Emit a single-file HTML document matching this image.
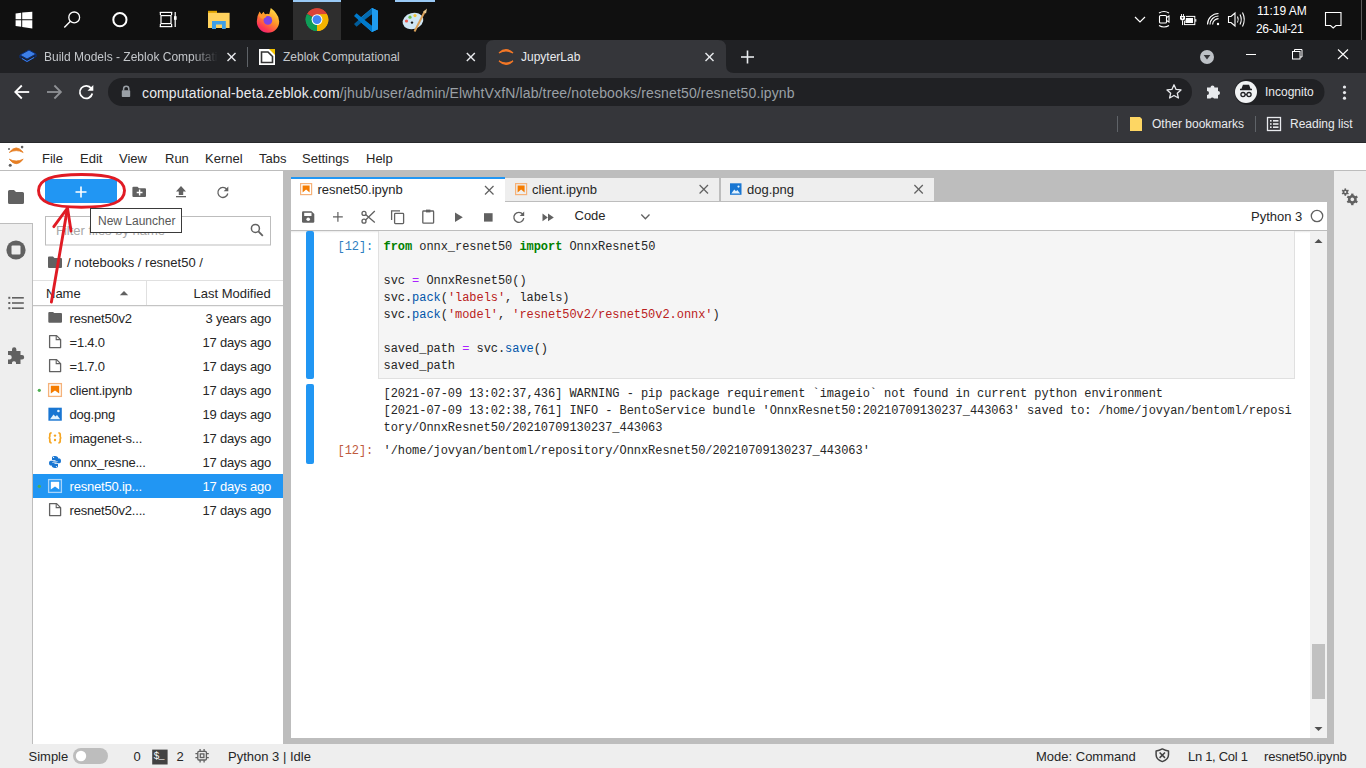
<!DOCTYPE html>
<html><head><meta charset="utf-8">
<style>
*{margin:0;padding:0;box-sizing:border-box}
html,body{width:1366px;height:768px;overflow:hidden;background:#fff;font-family:"Liberation Sans",sans-serif}
.a{position:absolute}
.t{position:absolute;white-space:nowrap;line-height:1}
svg{position:absolute;overflow:visible}
#taskbar{left:0;top:0;width:1366px;height:40px;background:#101010}
#tabstrip{left:0;top:40px;width:1366px;height:33px;background:#202124}
#toolbar{left:0;top:73px;width:1366px;height:70px;background:#35363a}
#omni{left:108px;top:78px;width:1084px;height:28px;border-radius:14px;background:#202124}
.ct{color:#e8eaed;font-size:12px}
.mono{font-family:"Liberation Mono",monospace}
</style></head>
<body>
<!-- ========== Windows taskbar ========== -->
<div id="taskbar" class="a"></div>
<!-- windows logo -->
<svg style="left:0;top:0" width="1366" height="40">
 <polygon points="15.6,13.6 21.2,12.8 21.2,19.2 15.6,19.2" fill="#fff"/>
 <polygon points="22.2,12.6 32.3,11.8 32.3,19.2 22.2,19.2" fill="#fff"/>
 <polygon points="15.6,20.2 21.2,20.2 21.2,26.8 15.6,26" fill="#fff"/>
 <polygon points="22.2,20.2 32.3,20.2 32.3,28.5 22.2,27" fill="#fff"/>
 <!-- search -->
 <circle cx="74.2" cy="17.4" r="5.4" fill="none" stroke="#fff" stroke-width="1.3"/>
 <line x1="70.4" y1="21.3" x2="64.3" y2="27.6" stroke="#fff" stroke-width="1.4"/>
 <!-- cortana -->
 <circle cx="119.9" cy="19.7" r="6.6" fill="none" stroke="#fff" stroke-width="2"/>
 <!-- task view -->
 <g fill="none" stroke="#fff" stroke-width="1.2">
  <rect x="161" y="15.6" width="10" height="8"/>
  <line x1="159.8" y1="12.4" x2="172.2" y2="12.4"/>
  <line x1="159.8" y1="26.6" x2="172.2" y2="26.6"/>
  <line x1="160.4" y1="12" x2="160.4" y2="15"/>
  <line x1="171.6" y1="12" x2="171.6" y2="15"/>
  <line x1="160.4" y1="24" x2="160.4" y2="27"/>
  <line x1="171.6" y1="24" x2="171.6" y2="27"/>
  <line x1="175.2" y1="12" x2="175.2" y2="27"/>
 </g>
 <rect x="174" y="16.2" width="2.6" height="3.6" fill="#fff"/>
 <!-- explorer -->
 <rect x="208" y="10.8" width="9" height="3" fill="#e0a400"/>
 <rect x="208" y="12.8" width="21.6" height="15.2" fill="#ffd25e"/>
 <path d="M212,28.9 V21 H225.8 V28.9 H222 V24.6 H216 V28.9 Z" fill="#3f9fe6"/>
 <!-- firefox -->
 <defs>
  <linearGradient id="ffg" x1="0.8" y1="0" x2="0.2" y2="1">
   <stop offset="0" stop-color="#ffe34a"/><stop offset="0.45" stop-color="#ff9628"/><stop offset="0.8" stop-color="#ff3a52"/><stop offset="1" stop-color="#e8207a"/>
  </linearGradient>
 </defs>
 <path d="M259.6,11.4 L261.4,14.3 L263.5,11.8 L265,14.2 Q267.2,13.4 269.2,14.2 L270.8,7.9 Q274.3,10.3 276.2,13.6 Q279.2,17.2 279.2,21.5 A11.2,11.2 0 0 1 256.8,21.5 Q256.8,15.6 259.6,11.4 Z" fill="url(#ffg)"/>
 <circle cx="267.9" cy="20.4" r="4.3" fill="#7f44e6"/>
 <path d="M258.8,14.6 Q263.2,14 266.6,16.6 Q265.2,18.6 262.4,18.8 Q259.8,18.2 258.8,14.6 Z" fill="#ff9a2e"/>
 <!-- chrome highlight -->
 <rect x="293" y="0" width="48" height="40" fill="#2e2e2e"/>
 <rect x="293" y="0" width="48" height="2" fill="#99c9f5"/>
 <rect x="395" y="0" width="40" height="2" fill="#99c9f5"/>
 <!-- chrome icon -->
 <g transform="translate(317,19.6)">
  <path d="M0,0 L11.4,0 A11.4,11.4 0 0 0 -9.87,-5.7 Z" fill="#db4437"/>
  <path d="M0,0 L-9.87,-5.7 A11.4,11.4 0 0 0 0,11.4 Z" fill="#0f9d58"/>
  <path d="M0,0 L0,11.4 A11.4,11.4 0 0 0 11.4,0 Z" fill="#f4b400"/>
  <path d="M0,-5.4 L9.87,-5.7 A11.4,11.4 0 0 0 -9.87,-5.7 Z" fill="#db4437"/>
  <path d="M4.7,2.7 L0,11.4 A11.4,11.4 0 0 0 9.87,-5.7 L0,-5.4 Z" fill="#f4b400"/>
  <path d="M-4.7,2.7 L-9.87,-5.7 A11.4,11.4 0 0 0 0,11.4 Z" fill="#0f9d58"/>
  <circle r="5.4" fill="#fff"/>
  <circle r="4.4" fill="#4285f4"/>
 </g>
 <!-- vscode -->
 <path d="M372,8 L378,10.8 V29.2 L372,32 L358,19.8 Z M372,14 L363.5,20 L372,26 Z" fill="#1f9cf0"/>
 <path d="M372,8 L354,24 L356.5,26.8 L372,14 Z" fill="#0065a9" opacity="0.9"/>
 <path d="M372,32 L354,16 L356.5,13.2 L372,26 Z" fill="#007acc"/>
 <path d="M372,8 L378,10.8 V29.2 L372,32 Z" fill="#1f9cf0"/>
 <!-- paint -->
 <ellipse cx="413" cy="21" rx="10.5" ry="8" fill="#cfe6f5" transform="rotate(-15 413 21)"/>
 <circle cx="406.5" cy="21" r="1.6" fill="#e85a4f"/>
 <circle cx="410" cy="17.2" r="1.6" fill="#6bc04b"/>
 <circle cx="415" cy="15.6" r="1.6" fill="#f2c23a"/>
 <circle cx="412" cy="22.6" r="1.2" fill="#101010"/>
 <line x1="414.5" y1="31.5" x2="425" y2="11" stroke="#d9a05a" stroke-width="2"/>
 <path d="M423,12 L427,8.5 L426,13.5 Z" fill="#e8c890"/>
 <!-- tray -->
 <polyline points="1135,17 1140,22 1145,17" fill="none" stroke="#fff" stroke-width="1.2"/>
 <g fill="none" stroke="#fff" stroke-width="1.1">
  <rect x="1159.5" y="15.5" width="7" height="7.5" rx="1"/>
  <path d="M1166.5,17.5 L1169,16 V22 L1166.5,20.5"/>
  <path d="M1159,13 Q1164,10 1169,13" />
  <path d="M1159,25.5 Q1164,28.5 1169,25.5"/>
 </g>
 <rect x="1184.4" y="16.4" width="10.4" height="8.2" fill="none" stroke="#fff" stroke-width="1"/>
 <rect x="1185.4" y="18" width="7.6" height="5" fill="#fff"/>
 <rect x="1195.2" y="19.1" width="1.1" height="2.6" fill="#fff"/>
 <path d="M1180,16 H1185 V18.5 Q1185,20.4 1182.5,20.6 Q1180,20.4 1180,18.5 Z" fill="#fff" stroke="#101010" stroke-width="1.6"/>
 <path d="M1180,16 H1185 V18.5 Q1185,20.4 1182.5,20.6 Q1180,20.4 1180,18.5 Z" fill="#fff"/>
 <path d="M1181.4,17.2 H1183.6 L1182.5,19 Z" fill="#101010"/>
 <rect x="1181" y="14" width="0.9" height="2" fill="#fff"/><rect x="1183.1" y="14" width="0.9" height="2" fill="#fff"/>
 <rect x="1182" y="20.4" width="1" height="4.7" fill="#fff"/>
 <g fill="none" stroke="#fff" stroke-width="1.1">
  <path d="M1207.5,24.5 A11,11 0 0 1 1218.5,13.5"/>
  <path d="M1210,24.5 A8.5,8.5 0 0 1 1218.5,16"/>
  <path d="M1212.6,24.5 A6,6 0 0 1 1218.5,18.6"/>
 </g>
 <circle cx="1218" cy="24" r="1.2" fill="#fff"/>
 <g fill="none" stroke="#fff" stroke-width="1.1">
  <path d="M1228.5,16.5 H1231 L1235,13 V26 L1231,22.5 H1228.5 Z"/>
  <path d="M1237.5,16.5 Q1239,19.5 1237.5,22.5"/>
  <path d="M1240,14.5 Q1242.5,19.5 1240,24.5"/>
  <path d="M1242.5,12.5 Q1246,19.5 1242.5,26.5"/>
 </g>
 <path d="M1325.5,12.5 H1341 V25.5 H1336 L1333.2,28 L1330.5,25.5 H1325.5 Z" fill="none" stroke="#fff" stroke-width="1.1"/>
 <rect x="1361" y="0" width="1" height="40" fill="#5a5a5a"/>
</svg>
<div class="t" style="left:1257px;top:5px;font-size:12px;color:#fff">11:19 AM</div>
<div class="t" style="left:1256px;top:23px;font-size:12px;color:#fff;letter-spacing:-0.3px">26-Jul-21</div>
<!-- ========== Chrome ========== -->
<div id="tabstrip" class="a"></div>
<div id="toolbar" class="a"></div>
<svg style="left:0;top:0" width="1366" height="143">
 <!-- active tab -->
 <path d="M478,73 Q486,73 486,65 V48 Q486,40 494,40 H718 Q726,40 726,48 V65 Q726,73 734,73 Z" fill="#35363a"/>
 <!-- separator -->
 <rect x="247" y="47" width="1" height="20" fill="#5f6368"/>
 <!-- tab1 icon (book) -->
 <path d="M20,55 L29,50 L36,54 L27,59 Z" fill="#3d7fe8" stroke="#0b2f7a" stroke-width="1"/>
 <path d="M20,55 V57.5 L27,61.5 L36,56.5 V54" fill="none" stroke="#0b2f7a" stroke-width="1.2"/>
 <path d="M22,58.5 L27,61.5 L34,57.5" fill="none" stroke="#3d7fe8" stroke-width="1"/>
 <!-- close x's -->
 <g stroke="#e8eaed" stroke-width="1.4">
  <line x1="227.5" y1="53" x2="235.5" y2="61"/><line x1="235.5" y1="53" x2="227.5" y2="61"/>
  <line x1="466.8" y1="53" x2="474.8" y2="61"/><line x1="474.8" y1="53" x2="466.8" y2="61"/>
  <line x1="705.5" y1="53" x2="713.5" y2="61"/><line x1="713.5" y1="53" x2="705.5" y2="61"/>
  <line x1="741" y1="57" x2="754" y2="57" stroke-width="1.6"/><line x1="747.5" y1="50.5" x2="747.5" y2="63.5" stroke-width="1.6"/>
 </g>
 <!-- tab2 icon -->
 <rect x="259" y="49" width="16" height="16" fill="#fff"/>
 <path d="M261.5,52 H268 L272.5,56.5 V62.5 H261.5 Z" fill="none" stroke="#333" stroke-width="1.6"/>
 <path d="M269,49 H275 V55 Z" fill="#f2c200"/>
 <!-- jupyter icon -->
 <path d="M499,53 Q506,46.5 513,53 Q506,49 499,53 Z" fill="#f37726" stroke="#f37726" stroke-width="1.2"/>
 <path d="M499,61 Q506,67.5 513,61 Q506,65 499,61 Z" fill="#f37726" stroke="#f37726" stroke-width="1.2"/>
 <!-- tab search -->
 <circle cx="1207" cy="57" r="7" fill="#bdc1c6"/>
 <path d="M1203.6,55 H1210.4 L1207,59.6 Z" fill="#35363a"/>
 <!-- window controls -->
 <line x1="1246" y1="54.5" x2="1256" y2="54.5" stroke="#fff" stroke-width="1"/>
 <rect x="1292.5" y="51.5" width="7.5" height="7.5" fill="none" stroke="#fff" stroke-width="1"/>
 <path d="M1294.5,51.5 V49.5 H1302 V57 H1300" fill="none" stroke="#fff" stroke-width="1"/>
 <line x1="1338" y1="49.5" x2="1348" y2="59" stroke="#fff" stroke-width="1.1"/>
 <line x1="1348" y1="49.5" x2="1338" y2="59" stroke="#fff" stroke-width="1.1"/>
 <!-- nav -->
 <g fill="none" stroke="#fff" stroke-width="1.8">
  <path d="M29.2,92 H16"/><path d="M21.8,85.5 L15.3,92 L21.8,98.5"/>
 </g>
 <g fill="none" stroke="#8f9195" stroke-width="1.8">
  <path d="M47,92 H60.2"/><path d="M54.4,85.5 L60.9,92 L54.4,98.5"/>
 </g>
 <path d="M91.3,88.5 A6.3,6.3 0 1 0 92.3,93.5" fill="none" stroke="#fff" stroke-width="1.8"/>
 <path d="M93.3,85 V90.8 H87.5 Z" fill="#fff"/>
</svg>
<div class="a" style="left:0;top:142px;width:1366px;height:1px;background:#28292c"></div>
<div id="omni" class="a"></div>
<svg style="left:0;top:0" width="1366" height="143">
 <!-- lock -->
 <path d="M123.6,90.5 V88.8 A2.6,2.6 0 0 1 128.8,88.8 V90.5" fill="none" stroke="#9aa0a6" stroke-width="1.5"/>
 <rect x="121.8" y="90.3" width="8.4" height="6.7" rx="0.8" fill="#9aa0a6"/>
 <!-- star -->
 <path d="M1174,84.8 L1176.1,89.4 L1181,89.9 L1177.3,93.2 L1178.4,98 L1174,95.5 L1169.6,98 L1170.7,93.2 L1167,89.9 L1171.9,89.4 Z" fill="none" stroke="#e8eaed" stroke-width="1.3" stroke-linejoin="round"/>
 <!-- puzzle -->
 <path d="M1207,87.5 H1210.5 A2,2 0 0 1 1214.5,87.5 H1218 V91 A2,2 0 0 1 1218,95 V98.5 H1214 A2,2 0 0 0 1210.5,98.5 H1207 V95 A2,2 0 0 0 1207,91 Z" fill="#e8eaed"/>
 <!-- incognito pill -->
 <rect x="1234.5" y="79" width="90" height="26" rx="13" fill="#202124"/>
 <circle cx="1246" cy="92" r="11" fill="#f1f3f4"/>
 <path d="M1240,89.5 H1252 M1242,89.5 L1243.5,85.5 H1248.5 L1250,89.5" fill="#202124" stroke="#202124" stroke-width="1.6"/>
 <circle cx="1243" cy="94.6" r="2.1" fill="none" stroke="#202124" stroke-width="1.3"/>
 <circle cx="1249" cy="94.6" r="2.1" fill="none" stroke="#202124" stroke-width="1.3"/>
 <line x1="1245" y1="94.6" x2="1247" y2="94.6" stroke="#202124" stroke-width="1"/>
 <!-- menu dots -->
 <circle cx="1344.5" cy="87" r="1.6" fill="#e8eaed"/>
 <circle cx="1344.5" cy="92.6" r="1.6" fill="#e8eaed"/>
 <circle cx="1344.5" cy="98.2" r="1.6" fill="#e8eaed"/>
 <!-- bookmarks -->
 <rect x="1117" y="116" width="1" height="16" fill="#5f6368"/>
 <rect x="1255" y="116" width="1" height="16" fill="#5f6368"/>
 <path d="M1130,117 H1140 L1142,119 V131 H1130 Z" fill="#fdd663"/>
 <rect x="1267.5" y="117.5" width="13" height="13" fill="none" stroke="#e8eaed" stroke-width="1.3"/>
 <g fill="#e8eaed">
  <rect x="1270" y="120" width="1.6" height="1.6"/><rect x="1273" y="120" width="5.5" height="1.6"/>
  <rect x="1270" y="123.2" width="1.6" height="1.6"/><rect x="1273" y="123.2" width="5.5" height="1.6"/>
  <rect x="1270" y="126.4" width="1.6" height="1.6"/><rect x="1273" y="126.4" width="5.5" height="1.6"/>
 </g>
</svg>
<div class="t ct" style="color:#c4c7cb;left:44px;top:51px;width:174px;overflow:hidden;-webkit-mask-image:linear-gradient(90deg,#000 85%,transparent)">Build Models - Zeblok Computational</div>
<div class="t ct" style="color:#c4c7cb;left:283px;top:51px">Zeblok Computational</div>
<div class="t ct" style="left:521px;top:51px">JupyterLab</div>
<div class="t" style="left:142px;top:86px;font-size:14px;color:#e8eaed;letter-spacing:0.14px">computational-beta.zeblok.com<span style="color:#9aa0a6">/jhub/user/admin/ElwhtVxfN/lab/tree/notebooks/resnet50/resnet50.ipynb</span></div>
<div class="t ct" style="left:1265px;top:86px;font-size:12px">Incognito</div>
<div class="t ct" style="left:1152px;top:118px">Other bookmarks</div>
<div class="t ct" style="left:1290px;top:118px">Reading list</div>
<!-- ========== JupyterLab ========== -->
<div class="a" style="left:0;top:143px;width:1366px;height:28px;background:#fff;border-bottom:1px solid #bdbdbd"></div>
<div class="a" style="left:0;top:171px;width:33px;height:573px;background:#eeeeee;border-right:1px solid #bdbdbd"></div>
<div class="a" style="left:0;top:171px;width:33px;height:52px;background:#fff"></div>
<div class="a" style="left:0;top:223px;width:32px;height:1px;background:#bdbdbd"></div>
<div class="a" style="left:33px;top:171px;width:250px;height:573px;background:#fff"></div>
<div class="a" style="left:283px;top:171px;width:1051px;height:573px;background:#bdbdbd"></div>
<div class="a" style="left:1334px;top:171px;width:32px;height:573px;background:#eeeeee"></div>
<div class="a" style="left:0;top:744px;width:1366px;height:24px;background:#eeeeee"></div>
<svg style="left:0;top:0" width="1366" height="768">
 <!-- jupyter logo -->
 <path d="M9.3,152.4 Q16.2,143.4 23.2,152.4 Q16.2,148.8 9.3,152.4 Z" fill="#e67e22" stroke="#e67e22" stroke-width="0.8"/>
 <path d="M9.3,159.2 Q16.2,168.2 23.2,159.2 Q16.2,162.8 9.3,159.2 Z" fill="#e67e22" stroke="#e67e22" stroke-width="0.8"/>
 <circle cx="22.1" cy="147.1" r="1.3" fill="#616161"/>
 <circle cx="9" cy="148.9" r="1" fill="#616161"/>
 <circle cx="10.2" cy="165.3" r="1.5" fill="#616161"/>
 <!-- left sidebar icons -->
 <path d="M8,191.5 Q8,190 9.5,190 H14 L16,192 H22.5 Q24,192 24,193.5 V202.5 Q24,204 22.5,204 H9.5 Q8,204 8,202.5 Z" fill="#616161"/>
 <circle cx="16" cy="250" r="9.6" fill="#616161"/>
 <rect x="11.5" y="245.5" width="9" height="9" rx="1" fill="#eeeeee"/>
 <g fill="#616161">
  <rect x="8.3" y="296.8" width="2" height="2"/><rect x="12" y="297" width="11.8" height="1.6"/>
  <rect x="8.3" y="302" width="2" height="2"/><rect x="12" y="302.2" width="11.8" height="1.6"/>
  <rect x="8.3" y="307.2" width="2" height="2"/><rect x="12" y="307.4" width="11.8" height="1.6"/>
 </g>
 <path d="M8,351 H12 V349.5 A2.2,2.2 0 0 1 16.4,349.5 V351 H20.5 V355 H22 A2.2,2.2 0 0 1 22,359.4 H20.5 V364 H16 V362.5 A2.2,2.2 0 0 0 12,362.5 V364 H8 V359.5 H9.5 A2.2,2.2 0 0 0 9.5,355 H8 Z" fill="#616161"/>
 <!-- file browser toolbar -->
 <rect x="45" y="179" width="72" height="24" fill="#2196f3"/>
 <path d="M81,186.5 V197.5 M75.5,192 H86.5" stroke="#fff" stroke-width="1.6"/>
 <path d="M132.4,187.8 Q132.4,186.7 133.5,186.7 H137.5 L139,188.2 H145 Q146,188.2 146,189.2 V196 Q146,197 145,197 H133.5 Q132.4,197 132.4,196 Z" fill="#616161"/>
 <path d="M139.6,189.6 V195.4 M136.7,192.5 H142.5" stroke="#fff" stroke-width="1.4"/>
 <path d="M181,186 L186,191.5 H183.2 V195 H178.8 V191.5 H176 Z" fill="#616161"/>
 <rect x="176" y="196" width="10" height="1.3" fill="#616161"/>
 <path d="M226.8,189.3 A5,5 0 1 0 227.8,193.5" fill="none" stroke="#616161" stroke-width="1.3"/>
 <path d="M228.3,186.6 V191.2 H223.7 Z" fill="#616161"/>
 <!-- filter box -->
 <rect x="45.5" y="216.5" width="225" height="28.5" fill="#fff" stroke="#bdbdbd" stroke-width="1"/>
 <circle cx="255.4" cy="228.4" r="4" fill="none" stroke="#616161" stroke-width="1.5"/>
 <line x1="258.4" y1="231.4" x2="262.8" y2="235.8" stroke="#616161" stroke-width="1.8"/>
 <!-- breadcrumbs folder -->
 <path d="M48,257.5 Q48,256.5 49,256.5 H53 L54.5,258 H61 Q62,258 62,259 V267 Q62,268 61,268 H49 Q48,268 48,267 Z" fill="#616161"/>
 <!-- header -->
 <rect x="33" y="280" width="250" height="1" fill="#e0e0e0"/>
 <rect x="33" y="305" width="250" height="1" fill="#c4c4c4"/>
 <rect x="33" y="306" width="250" height="1" fill="#f2f2f2"/>
 <rect x="146" y="281" width="1" height="24" fill="#e0e0e0"/>
 <path d="M119.8,295.2 L124,291 L128.2,295.2 Z" fill="#616161"/>
</svg>
<div class="t" style="left:42px;top:152px;font-size:13px;color:#262626">File</div>
<div class="t" style="left:80px;top:152px;font-size:13px;color:#262626">Edit</div>
<div class="t" style="left:119px;top:152px;font-size:13px;color:#262626">View</div>
<div class="t" style="left:165px;top:152px;font-size:13px;color:#262626">Run</div>
<div class="t" style="left:205px;top:152px;font-size:13px;color:#262626">Kernel</div>
<div class="t" style="left:259px;top:152px;font-size:13px;color:#262626">Tabs</div>
<div class="t" style="left:302px;top:152px;font-size:13px;color:#262626">Settings</div>
<div class="t" style="left:366px;top:152px;font-size:13px;color:#262626">Help</div>
<div class="t" style="left:56px;top:224px;font-size:13px;color:#a8a8a8">Filter files by name</div>
<div class="t" style="left:67px;top:256px;font-size:13px;color:#262626">/ notebooks / resnet50 /</div>
<div class="t" style="left:46px;top:287px;font-size:13px;color:#262626">Name</div>
<div class="t" style="left:193.5px;top:287px;font-size:13px;color:#262626">Last Modified</div>
<svg style="left:0;top:0" width="1366" height="768">
<path d="M48.3,313 Q48.3,312 49.3,312 H53 L54.3,313 H61 Q62,313 62,314 V321.8 Q62,322.8 61,322.8 H49.3 Q48.3,322.8 48.3,321.8 Z" fill="#616161"/>
<path d="M49.6,335.6 H56.6 L60.6,339.6 V347.6 H49.6 Z" fill="none" stroke="#616161" stroke-width="1.3" stroke-linejoin="round"/>
<path d="M56.2,335.6 V339.6 H60.6" fill="none" stroke="#616161" stroke-width="1.1"/>
<path d="M49.6,359.6 H56.6 L60.6,363.6 V371.6 H49.6 Z" fill="none" stroke="#616161" stroke-width="1.3" stroke-linejoin="round"/>
<path d="M56.2,359.6 V363.6 H60.6" fill="none" stroke="#616161" stroke-width="1.1"/>
<circle cx="39.3" cy="390.3" r="1.6" fill="#4caf50"/>
<rect x="48.6" y="383.6" width="12.8" height="12.8" fill="none" stroke="#f5b27a" stroke-width="1.3"/>
<path d="M50.8,385.8 H59.2 V393.6 L55,390.4 L50.8,393.6 Z" fill="#f57c00"/>
<rect x="48.4" y="407.7" width="13.4" height="13" fill="#1976d2"/>
<path d="M50,419.2 L53.5,414.5 L55.5,416.5 L57,415 L60.2,419.2 Z" fill="#e3f2fd"/>
<circle cx="58.4" cy="411" r="1.3" fill="#e3f2fd"/>
<path d="M51.6,432.8 Q49.8,432.8 49.8,434.6 V436.6 Q49.8,437.8 48.6,437.8 Q49.8,437.8 49.8,439 V441 Q49.8,442.8 51.6,442.8" fill="none" stroke="#f5a623" stroke-width="1.7"/>
<path d="M58.4,432.8 Q60.2,432.8 60.2,434.6 V436.6 Q60.2,437.8 61.4,437.8 Q60.2,437.8 60.2,439 V441 Q60.2,442.8 58.4,442.8" fill="none" stroke="#f5a623" stroke-width="1.7"/>
<circle cx="55" cy="435.6" r="1.2" fill="#f5a623"/><circle cx="55" cy="440" r="1.2" fill="#f5a623"/>
<path d="M55,456 C52,456 52,457 52,458.5 V460 H55.5 V460.7 H50.7 C49,460.7 49,463 49,463 C49,465 50,465.5 50.8,465.5 H52 V463.5 C52,462.3 53,461.6 54,461.6 H57 C58,461.6 58.3,461 58.3,460 V458.4 C58.3,457 57,456 55,456 Z" fill="#1976d2"/>
<path d="M55,468 C58,468 58,467 58,465.5 V464 H54.5 V463.3 H59.3 C61,463.3 61,461 61,461 C61,459 60,458.5 59.2,458.5 H58 V460.5 C58,461.7 57,462.4 56,462.4 H53 C52,462.4 51.7,463 51.7,464 V465.6 C51.7,467 53,468 55,468 Z" fill="#1976d2"/>
<circle cx="53.6" cy="457.4" r="0.6" fill="#fff"/><circle cx="56.4" cy="466.6" r="0.6" fill="#fff"/>
<rect x="33" y="474" width="250" height="24" fill="#2196f3"/>
<circle cx="39.3" cy="486.3" r="1.6" fill="#4caf50"/>
<rect x="48.6" y="479.6" width="12.8" height="12.8" fill="none" stroke="#a8d4fa" stroke-width="1.3"/>
<path d="M50.8,481.8 H59.2 V489.6 L55,486.4 L50.8,489.6 Z" fill="#fff"/>
<path d="M49.6,503.6 H56.6 L60.6,507.6 V515.6 H49.6 Z" fill="none" stroke="#616161" stroke-width="1.3" stroke-linejoin="round"/>
<path d="M56.2,503.6 V507.6 H60.6" fill="none" stroke="#616161" stroke-width="1.1"/>
</svg>
<div class="t" style="left:69.5px;top:312px;font-size:13px;letter-spacing:-0.2px;color:#262626">resnet50v2</div>
<div class="t" style="left:130px;width:141px;text-align:right;top:312px;font-size:13px;letter-spacing:-0.22px;color:#262626">3 years ago</div>
<div class="t" style="left:69.5px;top:336px;font-size:13px;letter-spacing:-0.2px;color:#262626">=1.4.0</div>
<div class="t" style="left:130px;width:141px;text-align:right;top:336px;font-size:13px;letter-spacing:-0.22px;color:#262626">17 days ago</div>
<div class="t" style="left:69.5px;top:360px;font-size:13px;letter-spacing:-0.2px;color:#262626">=1.7.0</div>
<div class="t" style="left:130px;width:141px;text-align:right;top:360px;font-size:13px;letter-spacing:-0.22px;color:#262626">17 days ago</div>
<div class="t" style="left:69.5px;top:384px;font-size:13px;letter-spacing:-0.2px;color:#262626">client.ipynb</div>
<div class="t" style="left:130px;width:141px;text-align:right;top:384px;font-size:13px;letter-spacing:-0.22px;color:#262626">17 days ago</div>
<div class="t" style="left:69.5px;top:408px;font-size:13px;letter-spacing:-0.2px;color:#262626">dog.png</div>
<div class="t" style="left:130px;width:141px;text-align:right;top:408px;font-size:13px;letter-spacing:-0.22px;color:#262626">19 days ago</div>
<div class="t" style="left:69.5px;top:432px;font-size:13px;letter-spacing:-0.2px;color:#262626">imagenet-s...</div>
<div class="t" style="left:130px;width:141px;text-align:right;top:432px;font-size:13px;letter-spacing:-0.22px;color:#262626">17 days ago</div>
<div class="t" style="left:69.5px;top:456px;font-size:13px;letter-spacing:-0.2px;color:#262626">onnx_resne...</div>
<div class="t" style="left:130px;width:141px;text-align:right;top:456px;font-size:13px;letter-spacing:-0.22px;color:#262626">17 days ago</div>
<div class="t" style="left:69.5px;top:480px;font-size:13px;letter-spacing:-0.2px;color:#fff">resnet50.ip...</div>
<div class="t" style="left:130px;width:141px;text-align:right;top:480px;font-size:13px;letter-spacing:-0.22px;color:#fff">17 days ago</div>
<div class="t" style="left:69.5px;top:504px;font-size:13px;letter-spacing:-0.2px;color:#262626">resnet50v2....</div>
<div class="t" style="left:130px;width:141px;text-align:right;top:504px;font-size:13px;letter-spacing:-0.22px;color:#262626">17 days ago</div>
<!-- notebook panel -->
<div class="a" style="left:291px;top:177px;width:214px;height:25px;background:#fff;border-top:2px solid #2196f3"></div>
<div class="a" style="left:505px;top:177px;width:215px;height:25px;background:#eeeeee;border:1px solid #bdbdbd;border-left:0"></div>
<div class="a" style="left:720px;top:177px;width:215px;height:25px;background:#eeeeee;border:1px solid #bdbdbd;border-left:1px solid #bdbdbd"></div>
<div class="a" style="left:291px;top:202px;width:1036px;height:536px;background:#fff"></div>
<div class="a" style="left:291px;top:230px;width:1036px;height:1px;background:#bdbdbd"></div>
<div class="a" style="left:291px;top:231px;width:1036px;height:2px;background:linear-gradient(#e8e8e8,#fff)"></div>
<!-- code cell -->
<div class="a" style="left:378px;top:231px;width:917px;height:148px;background:#f5f5f5;border:1px solid #e0e0e0;border-top:0"></div>
<div class="a" style="left:306px;top:231px;width:8px;height:148px;background:#2196f3;border-radius:2px"></div>
<div class="a" style="left:306px;top:384px;width:8px;height:80px;background:#2196f3;border-radius:2px"></div>
<!-- scrollbar -->
<div class="a" style="left:1310px;top:231px;width:17px;height:507px;background:#f1f1f1"></div>
<div class="a" style="left:1312px;top:644px;width:13px;height:55px;background:#c1c1c1"></div>
<svg style="left:0;top:0" width="1366" height="768">
 <path d="M1314.5,243 L1318.5,239 L1322.5,243 Z" fill="#505050"/>
 <path d="M1314.5,727 L1318.5,731 L1322.5,727 Z" fill="#505050"/>
 <!-- tab icons -->
 <rect x="300.6" y="183.6" width="11" height="11" fill="none" stroke="#f5b27a" stroke-width="1.2"/>
 <path d="M302.6,185.6 H309.6 V192.4 L306.1,189.6 L302.6,192.4 Z" fill="#f57c00"/>
 <rect x="515.6" y="183.6" width="11" height="11" fill="none" stroke="#f5b27a" stroke-width="1.2"/>
 <path d="M517.6,185.6 H524.6 V192.4 L521.1,189.6 L517.6,192.4 Z" fill="#f57c00"/>
 <rect x="730" y="183.3" width="11.5" height="11.5" fill="#1976d2"/>
 <path d="M731.3,193.6 L734.3,189.6 L736,191.3 L737.3,190 L740.2,193.6 Z" fill="#e3f2fd"/>
 <circle cx="738.5" cy="186.6" r="1.1" fill="#e3f2fd"/>
 <g stroke="#616161" stroke-width="1.2">
  <line x1="485" y1="186" x2="493.5" y2="194.5"/><line x1="493.5" y1="186" x2="485" y2="194.5"/>
  <line x1="699.6" y1="185" x2="708" y2="193.5"/><line x1="708" y1="185" x2="699.6" y2="193.5"/>
  <line x1="914.4" y1="185" x2="922.8" y2="193.5"/><line x1="922.8" y1="185" x2="914.4" y2="193.5"/>
 </g>
 <!-- toolbar icons -->
 <path d="M302,212.5 Q302,211.3 303.2,211.3 H311.5 L314.3,214 V221.5 Q314.3,222.7 313.1,222.7 H303.2 Q302,222.7 302,221.5 Z" fill="#616161"/>
 <rect x="304.2" y="212.8" width="7.3" height="3.2" fill="#fff"/>
 <circle cx="308.2" cy="219.2" r="1.8" fill="#fff"/>
 <path d="M337.9,212 V221.8 M333,216.9 H342.8" stroke="#616161" stroke-width="1.2"/>
 <g fill="none" stroke="#616161" stroke-width="1.3">
  <circle cx="364" cy="213.4" r="2"/><circle cx="364" cy="221.2" r="2"/>
  <path d="M365.6,214.6 L374.8,222.6 M365.6,220 L374.8,211"/>
  <path d="M391.6,220 V210.8 H400" />
  <rect x="394.6" y="213.4" width="9" height="10.2" rx="0.8"/>
  <rect x="422.8" y="211" width="10.8" height="12.2" rx="0.8"/>
 </g>
 <path d="M426,209.6 H430.4 V212.4 H426 Z" fill="#616161"/>
 <path d="M455,212.5 L462.8,217.2 L455,222 Z" fill="#616161"/>
 <rect x="484" y="213.2" width="8.6" height="8.4" fill="#616161"/>
 <path d="M522.8,214.2 A5,5 0 1 0 523.8,218.2" fill="none" stroke="#616161" stroke-width="1.3"/>
 <path d="M524.2,211.5 V216 H519.7 Z" fill="#616161"/>
 <path d="M542.5,213.5 L547.8,217.4 L542.5,221.3 Z M548,213.5 L553.8,217.4 L548,221.3 Z" fill="#616161"/>
 <polyline points="641.3,214.5 645.4,218.8 649.5,214.5" fill="none" stroke="#616161" stroke-width="1.3"/>
 <circle cx="1317" cy="216" r="5.7" fill="none" stroke="#616161" stroke-width="1.3"/>
 <!-- right sidebar gears -->
 <g fill="#616161">
  <circle cx="1345.3" cy="192.1" r="2.6"/>
  <g stroke="#616161" stroke-width="1.6">
   <line x1="1345.3" y1="188.4" x2="1345.3" y2="195.8"/><line x1="1342.1" y1="190.3" x2="1348.5" y2="193.9"/><line x1="1342.1" y1="193.9" x2="1348.5" y2="190.3"/>
  </g>
  <circle cx="1352.3" cy="199.4" r="4.4"/>
  <g stroke="#616161" stroke-width="2.4">
   <line x1="1352.3" y1="193.6" x2="1352.3" y2="205.2"/><line x1="1347.3" y1="196.5" x2="1357.3" y2="202.3"/><line x1="1347.3" y1="202.3" x2="1357.3" y2="196.5"/>
  </g>
 </g>
 <circle cx="1345.3" cy="192.1" r="1" fill="#eee"/>
 <circle cx="1352.3" cy="199.4" r="1.8" fill="#eee"/>
 <!-- status bar -->
 <rect x="73" y="748" width="35" height="16" rx="8" fill="#bdbdbd"/>
 <circle cx="81" cy="756" r="5.2" fill="#fff"/>
 <rect x="152.2" y="749.6" width="15.4" height="14.9" fill="#424242"/>
 <g fill="none" stroke="#616161" stroke-width="1.3">
  <rect x="197.8" y="751.4" width="8.6" height="8.6" rx="1"/>
  <rect x="200.3" y="753.9" width="3.6" height="3.6"/>
  <path d="M200.1,749 V751.4 M204.1,749 V751.4 M200.1,760 V762.4 M204.1,760 V762.4 M195.4,753.7 H197.8 M195.4,757.7 H197.8 M206.4,753.7 H208.8 M206.4,757.7 H208.8"/>
 </g>
 <path d="M1162.3,748.9 Q1165.4,750.6 1168.5,751 V754.8 Q1168.5,759.6 1162.3,761.6 Q1156.1,759.6 1156.1,754.8 V751 Q1159.2,750.6 1162.3,748.9 Z" fill="none" stroke="#424242" stroke-width="1.5" stroke-linejoin="round"/>
 <path d="M1159.6,752.5 L1165,757.9 M1165,752.5 L1159.6,757.9" stroke="#424242" stroke-width="1.5"/>
</svg>
<div class="t" style="left:317.5px;top:183px;font-size:13px;color:#262626">resnet50.ipynb</div>
<div class="t" style="left:532px;top:183px;font-size:13px;color:#262626">client.ipynb</div>
<div class="t" style="left:747px;top:183px;font-size:13px;color:#262626">dog.png</div>
<div class="t" style="left:574.5px;top:208.5px;font-size:13px;color:#262626">Code</div>
<div class="t" style="left:1251px;top:210px;font-size:13px;color:#262626">Python 3</div>
<div class="t mono" style="left:153.5px;top:752px;font-size:10px;color:#fff;letter-spacing:-1px">$_</div>
<div class="t" style="left:28.5px;top:750px;font-size:13px;color:#262626">Simple</div>
<div class="t" style="left:133.5px;top:750px;font-size:13px;color:#262626">0</div>
<div class="t" style="left:176.5px;top:750px;font-size:13px;color:#262626">2</div>
<div class="t" style="left:228px;top:750px;font-size:13px;color:#262626">Python 3 | Idle</div>
<div class="t" style="left:1036px;top:750px;font-size:13px;color:#262626">Mode: Command</div>
<div class="t" style="left:1188px;top:750px;font-size:13px;letter-spacing:-0.3px;color:#262626">Ln 1, Col 1</div>
<div class="t" style="left:1264px;top:750px;font-size:13px;letter-spacing:-0.2px;color:#262626">resnet50.ipynb</div>
<!-- code -->
<style>
.code{position:absolute;left:383.5px;font-family:"Liberation Mono",monospace;font-size:12px;letter-spacing:-0.05px;line-height:17px;white-space:pre;color:#262626}
.kw{color:#008000;font-weight:bold}.op{color:#aa22ff}.pr{color:#0055aa}.st{color:#ba2121}
.prompt{position:absolute;font-family:"Liberation Mono",monospace;font-size:12px;letter-spacing:-0.05px;line-height:17px;white-space:pre}
</style>
<div class="prompt" style="left:337.5px;top:239px;color:#307fc1">[12]:</div>
<div class="code" style="top:239px"><span class="kw">from</span> onnx_resnet50 <span class="kw">import</span> OnnxResnet50

svc <span class="op">=</span> OnnxResnet50()
svc.<span class="pr">pack</span>(<span class="st">'labels'</span>, labels)
svc.<span class="pr">pack</span>(<span class="st">'model'</span>, <span class="st">'resnet50v2/resnet50v2.onnx'</span>)

saved_path <span class="op">=</span> svc.<span class="pr">save</span>()
saved_path</div>
<div class="code" style="top:386px">[2021-07-09 13:02:37,436] WARNING - pip package requirement `imageio` not found in current python environment
[2021-07-09 13:02:38,761] INFO - BentoService bundle 'OnnxResnet50:20210709130237_443063' saved to: /home/jovyan/bentoml/reposi
tory/OnnxResnet50/20210709130237_443063</div>
<div class="prompt" style="left:337.5px;top:443px;color:#bf5b3d">[12]:</div>
<div class="code" style="top:443px">'/home/jovyan/bentoml/repository/OnnxResnet50/20210709130237_443063'</div>
<!-- annotation -->
<svg style="left:0;top:0" width="1366" height="768">
 <g fill="none" stroke="#e01b24" stroke-width="2.9" stroke-linecap="round" stroke-linejoin="round">
  <path d="M38.5,190.6 C38.5,179.33 51.40,174.5 81.5,174.5 C111.60,174.5 124.5,179.33 124.5,190.6 C124.5,202.22 111.60,207.2 81.5,207.2 C51.40,207.2 38.5,202.22 38.5,190.6 Z"/>
  <path d="M67.5,208 L51.4,302"/>
  <path d="M67.5,208 L53.8,226.6"/>
  <path d="M67.5,208 L71,231"/>
 </g>
</svg>
<div class="a" style="left:90px;top:208px;width:92px;height:25px;background:#fff;border:1px solid #3a3a3a"></div>
<div class="t" style="left:98px;top:215px;font-size:12px;color:#575757">New Launcher</div>
</body></html>
